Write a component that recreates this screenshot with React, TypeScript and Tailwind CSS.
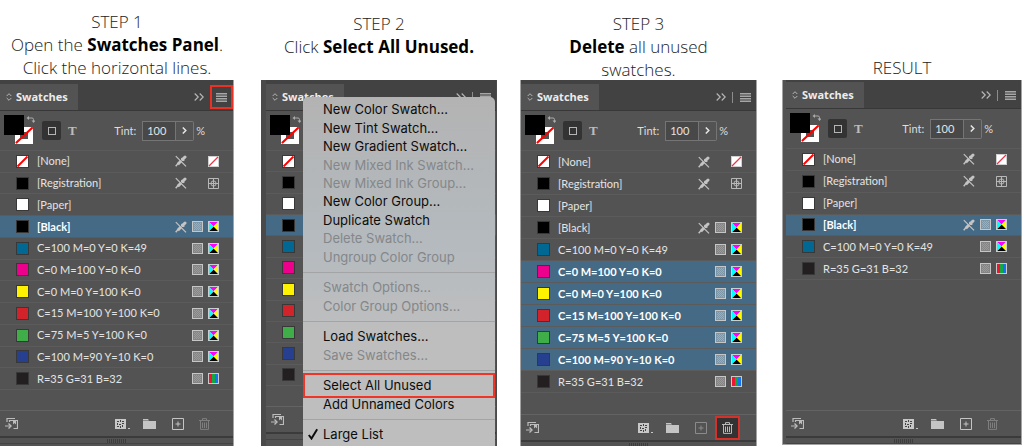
import type { ReactNode } from 'react';
import { clsx } from 'clsx';

type Swatch = { name: string; color: string; mode: 'none' | 'registration' | 'paper' | 'cmyk' | 'rgb'; locked?: boolean };

const SWATCHES: Swatch[] = [
  { name: '[None]', color: 'none', mode: 'none', locked: true },
  { name: '[Registration]', color: '#000000', mode: 'registration', locked: true },
  { name: '[Paper]', color: '#ffffff', mode: 'paper' },
  { name: '[Black]', color: '#000000', mode: 'cmyk', locked: true },
  { name: 'C=100 M=0 Y=0 K=49', color: '#006893', mode: 'cmyk' },
  { name: 'C=0 M=100 Y=0 K=0', color: '#ec008c', mode: 'cmyk' },
  { name: 'C=0 M=0 Y=100 K=0', color: '#fff200', mode: 'cmyk' },
  { name: 'C=15 M=100 Y=100 K=0', color: '#d2232a', mode: 'cmyk' },
  { name: 'C=75 M=5 Y=100 K=0', color: '#3fae49', mode: 'cmyk' },
  { name: 'C=100 M=90 Y=10 K=0', color: '#263f8f', mode: 'cmyk' },
  { name: 'R=35 G=31 B=32', color: '#231f20', mode: 'rgb' },
];

const RESULT = [...SWATCHES.slice(0, 5), SWATCHES[10]];

const MENU: { items: { label: string; disabled?: boolean; checked?: boolean; marked?: boolean }[]; size: string }[] = [
  {
    size: 'h-[166px]',
    items: [
      { label: 'New Color Swatch...' },
      { label: 'New Tint Swatch...' },
      { label: 'New Gradient Swatch...' },
      { label: 'New Mixed Ink Swatch...', disabled: true },
      { label: 'New Mixed Ink Group...', disabled: true },
      { label: 'New Color Group...' },
      { label: 'Duplicate Swatch' },
      { label: 'Delete Swatch...', disabled: true },
      { label: 'Ungroup Color Group', disabled: true },
    ],
  },
  { size: 'h-[37px]', items: [{ label: 'Swatch Options...', disabled: true }, { label: 'Color Group Options...', disabled: true }] },
  { size: 'h-[37px]', items: [{ label: 'Load Swatches...' }, { label: 'Save Swatches...', disabled: true }] },
  { size: 'h-[37px]', items: [{ label: 'Select All Unused', marked: true }, { label: 'Add Unnamed Colors' }] },
  { size: 'h-[18px]', items: [{ label: 'Large List', checked: true }] },
];

function Slash() {
  return (
    <svg width="13" height="13" viewBox="0 0 13 13">
      <rect x="0.5" y="0.5" width="12" height="12" fill="#fff" stroke="#3a3a3a" />
      <path d="M1.5 11.5 11.5 1.5" stroke="#f00" strokeWidth="2" />
    </svg>
  );
}

function LockIcon() {
  return (
    <svg width="12" height="12" viewBox="0 0 12 12" fill="none" stroke="#c4c4c4">
      <path d="M.8 1.2 11 11.4" strokeWidth="1.2" />
      <path d="M.7 11.3 3 8.5" strokeWidth="1.4" />
      <path d="M2.8 9.2 6 6" strokeWidth="3" />
      <path d="M6.5 3 9.200 5.700" strokeWidth="1.6" />
      <path d="M7.5 4.500 10 2" strokeWidth="3" strokeLinecap="round" />
    </svg>
  );
}

function HatchIcon({ selected }: { selected?: boolean }) {
  const dots = [];
  for (let y = 2; y < 9; y++) for (let x = 2 + (y % 2); x < 9; x += 2) dots.push(<rect key={`${x}-${y}`} x={x} y={y} width="1" height="1" />);
  return (
    <svg width="11" height="11" viewBox="0 0 11 11">
      <rect x="0.5" y="0.5" width="10" height="10" fill={selected ? '#7d96a8' : '#858585'} stroke="#c6c6c6" />
      <g fill={selected ? '#9aafbd' : '#9b9b9b'}>{dots}</g>
    </svg>
  );
}

function ModeIcon({ mode }: { mode: Swatch['mode'] }) {
  if (mode === 'none')
    return (
      <svg width="11" height="11" viewBox="0 0 11 11">
        <rect x="0.5" y="0.5" width="10" height="10" fill="#fff" stroke="#d0d0d0" />
        <path d="M1 10 10 1" stroke="#e8374a" strokeWidth="1.2" />
      </svg>
    );
  if (mode === 'registration')
    return (
      <svg width="11" height="11" viewBox="0 0 11 11" fill="none" stroke="#b8b8b8">
        <path d="M.5.5h10v10H.5zM5.5 1v9M1 5.5h9" />
        <circle cx="5.5" cy="5.5" r="2.6" />
      </svg>
    );
  if (mode === 'rgb')
    return (
      <svg width="11" height="11" viewBox="0 0 11 11">
        <rect x="1" y="1" width="3" height="9" fill="#f01432" />
        <rect x="4" y="1" width="3" height="9" fill="#12a844" />
        <rect x="7" y="1" width="3" height="9" fill="#1473f0" />
        <rect x="0.5" y="0.5" width="10" height="10" fill="none" stroke="#c9c9c9" />
      </svg>
    );
  if (mode === 'cmyk')
    return (
      <svg width="11" height="11" viewBox="0 0 11 11">
        <rect width="11" height="11" fill="#fff" />
        <path d="M1 1h9L5.5 5.5z" fill="#f0f" />
        <path d="M10 1v9L5.5 5.5z" fill="#ff0" />
        <path d="M1 10h9L5.5 5.5z" fill="#000" />
        <path d="M1 1v9l4.5-4.5z" fill="#0ff" />
        <rect x="0.5" y="0.5" width="10" height="10" fill="none" stroke="#c9d0d0" />
      </svg>
    );
  return <span className="w-[11px]" />;
}

function FillStroke() {
  return (
    <svg width="31" height="31" viewBox="0 0 31 31" className="shrink-0">
      <rect x="11" y="12" width="18" height="17" fill="#fff" />
      <rect x="16" y="17" width="8" height="7" fill="#535353" />
      <path d="M12.5 27.500 28 13" stroke="#f00" strokeWidth="2.2" strokeLinecap="round" />
      <rect x="0" y="0" width="20" height="20" fill="#000" />
      <path d="M24 3h4q1.5 0 1.5 1.5V6" fill="none" stroke="#aaa" />
      <path d="M25 1v4l-2.5-2zM27.5 5.5h4l-2 2.5z" fill="#aaa" />
    </svg>
  );
}

function SwatchRow({ swatch, selected, covered }: { swatch: Swatch; selected: boolean; covered: boolean }) {
  return (
    <li
      className={clsx(
        'flex items-center border-t border-[#5b5b5b] pl-4 pr-3.5',
        selected ? 'bg-[#446a85] font-bold text-white' : 'text-[#e4e4e4]',
      )}
    >
      {swatch.color === 'none' ? (
        <Slash />
      ) : (
        <span className="size-[13px] border border-[#383838]" style={{ backgroundColor: swatch.color }} />
      )}
      <span className="ml-2 flex-1 whitespace-nowrap">{!covered && swatch.name}</span>
      <span className="flex items-center gap-[5px]">
        {swatch.locked && <LockIcon />}
        {swatch.mode === 'cmyk' || swatch.mode === 'rgb' ? <HatchIcon selected={selected} /> : <span className="w-[11px]" />}
        <ModeIcon mode={swatch.mode} />
      </span>
    </li>
  );
}

function MenuLines() {
  return (
    <svg width="11" height="9" viewBox="0 0 11 9" fill="#a6a6a6">
      <path d="M0 0h11v1.5H0zM0 2.500h11V4H0zM0 5h11v1.500H0zM0 7.500h11V9H0z" />
    </svg>
  );
}

type PanelProps = {
  id: string;
  swatches: Swatch[];
  selected: string[];
  // frame classes, row block and list block heights
  frame: string;
  rows: string;
  list: string;
  top?: string;
  highlight?: 'menu' | 'trash';
  // an open menu lies over the rows and the tint field
  menu?: ReactNode;
};

function SwatchesPanel({ id, swatches, selected, frame, rows, list, top = 'pt-1', highlight, menu }: PanelProps) {
  const trashOn = highlight === 'trash';
  return (
    <section className={clsx('relative bg-[#535353] font-[Lato,"Open_Sans",sans-serif] text-[11px] leading-4', frame)}>
      <header className={clsx('flex border-b border-[#383838] bg-[#424242]', top)}>
        <h2 className="flex h-[26px] w-[78px] items-center gap-1 bg-[#535353] pl-1.5 font-['Open_Sans',sans-serif] font-bold text-[#ececec]">
          <svg width="6" height="8" viewBox="0 0 6 8" fill="none" stroke="#b5b5b5">
            <path d="M.7 3 3 .7 5.3 3M.7 5 3 7.3 5.3 5" />
          </svg>
          Swatches
        </h2>
        <div className="flex flex-1 items-center justify-end">
          <button type="button" aria-label="Collapse panel" className="mr-1.5">
            <svg width="10" height="8" viewBox="0 0 10 8" fill="none" stroke="#b5b5b5" strokeWidth="1.2">
              <path d="M.7.5 4.2 4 .7 7.5M5.7.5 9.2 4 5.7 7.5" />
            </svg>
          </button>
          {highlight !== 'menu' && <span className="mr-0.5 h-[11px] w-px bg-[#8c8c8c]" />}
          <button
            type="button"
            aria-label="Panel menu"
            className={clsx(
              'flex items-center justify-center',
              highlight === 'menu' ? 'h-6 w-[23px] border-2 border-[#ed3024]' : 'h-4 w-[21px]',
            )}
          >
            <MenuLines />
          </button>
        </div>
      </header>

      <div className="flex h-[39px] items-center pl-1 text-[#dedede]">
        <FillStroke />
        <button
          type="button"
          aria-label="Formatting affects container"
          className="ml-[7px] flex size-[19px] shrink-0 items-center justify-center rounded-[2px] bg-[#333]"
        >
          <span className="size-2 border border-[#b5b5b5]" />
        </button>
        {!menu && (
          <>
            <button type="button" aria-label="Formatting affects text" className="ml-[7px] font-['Liberation_Serif',serif] text-[13px] font-bold text-[#bdbdbd]">
              T
            </button>
            <div className="ml-auto mr-7 flex items-center">
              <label htmlFor={`tint-${id}`} className="mr-1.5">
                Tint:
              </label>
              <input
                id={`tint-${id}`}
                defaultValue="100"
                className="h-5 w-[34px] border border-[#757575] bg-[#484848] pl-1 text-[#e4e4e4]"
              />
              <button type="button" aria-label="Tint slider" className="flex h-5 w-[18px] items-center justify-center rounded-r-[2px] border border-l-0 border-[#757575]">
                <svg width="5" height="7" viewBox="0 0 5 7" fill="none" stroke="#e6e6e6" strokeWidth="1.5">
                  <path d="M.8.5 3.8 3.5.8 6.5" />
                </svg>
              </button>
              <span className="ml-0.5">%</span>
            </div>
          </>
        )}
      </div>

      <div className={list}>
        <ul className={clsx('grid auto-rows-fr', rows)}>
          {swatches.map(s => (
            <SwatchRow key={s.name} swatch={s} selected={selected.includes(s.name)} covered={!!menu} />
          ))}
        </ul>
        <div className="border-t border-[#5b5b5b]" />
      </div>

      <footer className="border-t border-[#636363]">
        <div className="flex h-[25px] items-center pl-[5px] pr-4">
          <button type="button" aria-label="Add to library" className="mr-auto">
            <svg width="13" height="13" viewBox="0 0 13 13" fill="none" stroke="#bcbcbc">
              <path d="M2 5V1.500H10M4.500 5V3.500h8v8h-4M0 9h5" strokeWidth="1.2" />
              <path d="M3.5 6.500 6 9l-2.5 2.500" strokeWidth="1.4" />
              <path d="M8 3h3v4.500L9.500 6 8 7.500z" fill="#bcbcbc" stroke="none" />
            </svg>
          </button>
          <button type="button" aria-label="Swatch views">
            <svg width="16" height="12" viewBox="0 0 16 12">
              <rect x="0" y="1" width="11" height="10" fill="#c8c8c8" />
              <path d="M2 3h2v1H2zM5 2h1v2H5zM7 3h2v1H7zM2 5h1v2H2zM4 6h2v1H4zM7 5h2v1H7zM2 8h2v1H2zM5 8h1v2H5zM7 7h1v2H7z" fill="#444" />
              <rect x="13" y="10" width="2" height="1" fill="#c8c8c8" />
            </svg>
          </button>
          <button type="button" aria-label="New color group" className="ml-3">
            <svg width="13" height="12" viewBox="0 0 13 12" fill="#c4c4c4">
              <path d="M0 1h5l1 1.500H0zM0 3h13v8H0z" />
            </svg>
          </button>
          <button type="button" aria-label="New swatch" className={clsx('ml-4', trashOn && 'opacity-50')}>
            <svg width="12" height="12" viewBox="0 0 12 12" fill="none" stroke="#c4c4c4">
              <path d="M.5.5h11v11H.5zM6 3.500v5M3.500 6h5" />
            </svg>
          </button>
          <button
            type="button"
            aria-label="Delete swatch"
            className={clsx(
              'ml-2 flex h-6 w-[25px] items-center justify-center',
              trashOn ? 'border-2 border-[#d5302a] bg-[#333] text-[#b9b9b9]' : 'text-[#7e7e7e]',
            )}
          >
            <svg width="11" height="12" viewBox="0 0 11 12" fill="none" stroke="currentColor">
              <path d="M0 2.500h11M3.500 2V.6h4V2M1.500 3v8.400h8V3M3.500 4.500V10M5.500 4.500V10M7.500 4.500V10" />
            </svg>
          </button>
        </div>
        <div className="h-[2px] bg-[#3b3b3b]" />
        <div className="flex h-[5px] items-center justify-center">
          <svg width="20" height="4" viewBox="0 0 20 4" stroke="#3d3d3d">
            <path d="M.5 0v4M2.500 0v4M4.500 0v4M6.500 0v4M8.500 0v4M10.500 0v4M12.500 0v4M14.500 0v4M16.500 0v4M18.500 0v4" />
          </svg>
        </div>
        <div className="h-px bg-[#444]" />
        {highlight && <div className="h-1" />}
      </footer>
      {menu}
    </section>
  );
}

function PanelMenu() {
  return (
    <div
      role="menu"
      className="absolute left-[37px] right-[1px] top-[17px] rounded-t-[5px] bg-linear-to-b from-[#b3b3b3] via-[#b4babe] via-40% to-[#bebebe] to-65% pb-4 pt-[3px] font-[Inter,sans-serif] text-[13px] leading-[18px] text-[#0c0c0c]"
    >
      {MENU.map((group, i) => (
        <div key={i}>
          {i > 0 && (
            <div className="flex h-3 items-center">
              <div className="h-px w-full bg-[#a2a4a5]" />
            </div>
          )}
          <div className={clsx('grid auto-rows-fr', group.size)}>
            {group.items.map(item => (
              <button
                key={item.label}
                type="button"
                role="menuitem"
                disabled={item.disabled}
                className={clsx(
                  'flex items-center whitespace-nowrap text-left disabled:text-[#84878a]',
                  item.marked && '-my-[3px] border-2 border-[#ee3527]',
                )}
              >
                <span className={clsx('flex justify-center', item.marked ? 'w-[18px]' : 'w-5')}>
                  {item.checked && (
                    <svg width="10" height="12" viewBox="0 0 10 12" fill="none" stroke="#0c0c0c" strokeWidth="2">
                      <path d="M.8 7 3.5 10.500 9.200 1.200" />
                    </svg>
                  )}
                </span>
                {item.label}
              </button>
            ))}
          </div>
        </div>
      ))}
    </div>
  );
}

function Step({ title, offset, gutter, children, panel }: { title: string; offset: string; gutter: string; children?: ReactNode; panel: ReactNode }) {
  return (
    <article className={clsx('min-w-0', gutter)}>
      <div className={clsx('h-20 whitespace-nowrap text-center font-["Open_Sans",sans-serif] text-[17px] font-light leading-[23px] text-[#222]', offset)}>
        <h1>{title}</h1>
        {children}
      </div>
      {panel}
    </article>
  );
}

export default function App() {
  return (
    <main className="grid h-screen grid-cols-[261fr_259fr_262fr_242fr] overflow-hidden bg-white">
      <Step
        title="STEP 1"
        offset="pt-[10px]"
        gutter="pr-[27px]"
        panel={
          <SwatchesPanel id="open" swatches={SWATCHES} selected={['[Black]']} frame="border-r border-[#a3a3a3]" rows="h-[239px]" list="h-[260px]" highlight="menu" />
        }
      >
        <p>
          Open the <strong className="font-bold text-black">Swatches Panel</strong>.
        </p>
        <p>Click the horizontal lines.</p>
      </Step>

      <Step
        title="STEP 2"
        offset="pt-3"
        gutter="pr-[23px]"
        panel={
          <SwatchesPanel
            id="select"
            swatches={SWATCHES}
            selected={['[Black]']}
            frame="border-l-[5px] border-r border-[#4a4a4a] pb-4"
            rows="h-[235px]"
            list="h-[256px]"
            menu={<PanelMenu />}
          />
        }
      >
        <p>
          Click <strong className="font-bold text-black">Select All Unused.</strong>
        </p>
      </Step>

      <Step
        title="STEP 3"
        offset="pt-3"
        gutter="pr-[25px]"
        panel={
          <SwatchesPanel
            id="delete"
            swatches={SWATCHES}
            selected={SWATCHES.slice(5, 10).map(s => s.name)}
            frame="border-x border-[#a3a3a3]"
            rows="h-[242px]"
            list="h-[264px]"
            highlight="trash"
          />
        }
      >
        <p>
          <strong className="font-bold text-black">Delete</strong> all unused
        </p>
        <p>swatches.</p>
      </Step>

      <Step
        title="RESULT"
        offset="pt-14"
        gutter="pr-[2px]"
        panel={
          <SwatchesPanel id="result" swatches={RESULT} selected={['[Black]']} frame="border border-t-0 border-[#a3a3a3] pl-[3px]" rows="h-[131px]" list="h-[262px]" top="pt-0.5" />
        }
      />
    </main>
  );
}
